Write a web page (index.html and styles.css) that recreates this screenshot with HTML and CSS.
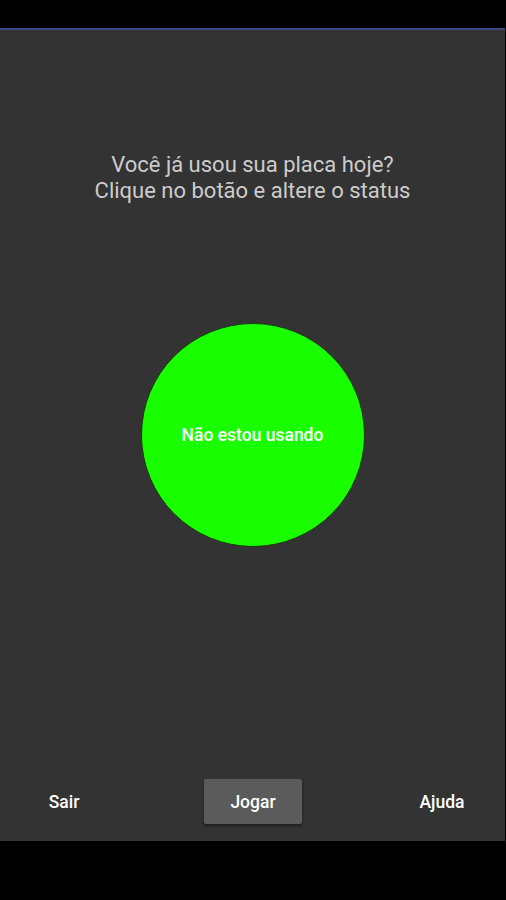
FILE: index.html
```html
<!DOCTYPE html>
<html lang="pt">
<head>
<meta charset="utf-8">
<link rel="stylesheet" href="styles.css">
</head>
<body>
<div class="screen">
  <div class="statusbar"></div>
  <div class="app">
    <main class="content">
      <p class="prompt">Você já usou sua placa hoje?<br>Clique no botão e altere o status</p>
      <div class="circle-wrap">
        <button class="circle">Não estou usando</button>
      </div>
    </main>
    <nav class="bottom">
      <button class="nav-btn">Sair</button>
      <button class="nav-btn primary">Jogar</button>
      <button class="nav-btn">Ajuda</button>
    </nav>
  </div>
  <div class="navbar"></div>
</div>
</body>
</html>
```
FILE: styles.css
```css
* { box-sizing: border-box; }
html, body { margin: 0; padding: 0; background: #000; }
body { font-family: Roboto, "Noto Sans", sans-serif; }
.screen { width: 506px; height: 900px; display: flex; flex-direction: column; }
.statusbar { height: 28px; background: #000; }
.app {
  height: 813px;
  width: 505px;
  background: #333333;
  border-top: 2px solid #3c4784;
  display: flex;
  flex-direction: column;
}
.content { flex: 1; display: flex; flex-direction: column; align-items: center; }
.prompt {
  margin: 122px 0 0;
  color: #cccccc;
  font-size: 22px;
  line-height: 26px;
  text-align: center;
}
.circle-wrap { margin-top: 119px; }
.circle {
  width: 224px;
  height: 224px;
  border-radius: 50%;
  background: #19ff00;
  border: 1px solid #1a3a10;
  color: #fff;
  font-family: Roboto, sans-serif;
  font-weight: 500;
  font-size: 17.5px;
  padding: 0;
  margin: 0;
}
.bottom {
  height: 90px;
  display: flex;
  align-items: center;
  justify-content: space-between;
  padding: 11px 0 0 0;
}
.nav-btn {
  background: transparent;
  border: 0;
  color: #fff;
  font-family: Roboto, sans-serif;
  font-weight: 500;
  font-size: 17.5px;
  width: 98px;
  height: 45px;
  padding: 0;
  margin: 0 14px;
  border-radius: 2px;
}
.nav-btn:first-child { margin-left: 15px; }
.nav-btn:last-child { margin-right: 14px; }
.nav-btn.primary {
  background: #5b5b5b;
  box-shadow: 0 2px 3px rgba(0,0,0,0.45);
}
.navbar { flex: 1; background: #000; }
```
